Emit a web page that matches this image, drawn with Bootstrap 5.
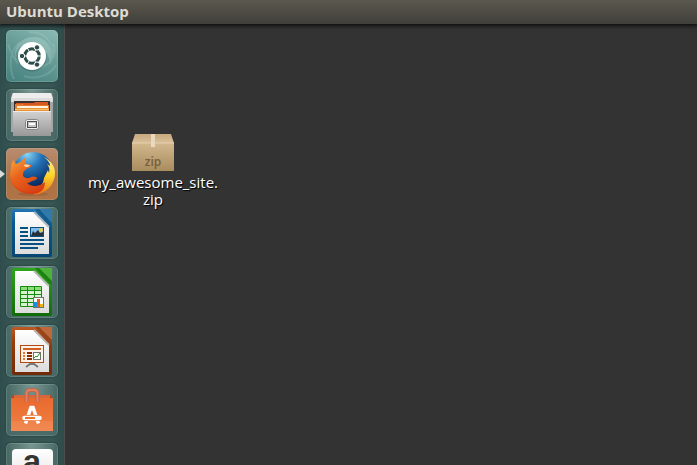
<!DOCTYPE html>
<html lang="en">
<head>
<meta charset="utf-8">
<meta name="viewport" content="width=device-width, initial-scale=1">
<title>Ubuntu Desktop</title>
<link href="https://cdn.jsdelivr.net/npm/bootstrap@5.3.0/dist/css/bootstrap.min.css" rel="stylesheet">
<style>
body { background: #333; font-family: "Open Sans", "Noto Sans", sans-serif; }
.top-panel { height: 24px; padding: 0 6px; background: linear-gradient(#5b584e, #403f3a); z-index: 2; box-shadow: 0 1px 4px 1px rgba(0,0,0,.75); }
.panel-title { font-size: 15px; line-height: 22px; font-weight: 700; color: #dfdbd2; }
.launcher { width: 65px; padding: 6px; gap: 7px; background: linear-gradient(90deg, #2f4d4c, #365553 12px, #365553 52px, #2f4b4a); border-right: 1px solid #4d4f4f; }
.tile { width: 52px; height: 52px; border-radius: 5px; background: radial-gradient(ellipse at 50% 0, rgba(215,240,232,.42), rgba(150,190,180,.22) 65%, rgba(150,190,180,.2)); box-shadow: inset 0 0 0 1px rgba(190,220,212,.2), 0 0 2px rgba(10,30,30,.6); }
.tile-dash { background: linear-gradient(25deg, #45817e, #659a95 55%, #8dbcb6); }
.tile-fox { background: linear-gradient(#b98d70, #ad7144 60%, #b07446); }
.tile svg { width: 52px; height: 52px; }
.running { left: -6px; top: 22px; width: 5px; height: 8px; background: #d8dcdb; clip-path: polygon(0 0, 100% 50%, 0 100%); }
.workspace { padding: 107px 20px; }
.file-item { width: 136px; gap: 1px; color: #fff; font-size: 15px; line-height: 17px; }
.file-item:hover { color: #fff; }
.file-item svg { width: 44px; height: 42px; }
.file-name { text-shadow: 1px 1px 1px #000; }
</style>
<script src="https://cdn.jsdelivr.net/npm/bootstrap@5.3.0/dist/js/bootstrap.bundle.min.js" defer></script>
</head>
<body class="d-flex flex-column vh-100 overflow-hidden">
<svg width="0" height="0" class="position-absolute" aria-hidden="true">
  <defs>
    <linearGradient id="paper" x2="0" y2="1"><stop stop-color="#fff"/><stop offset="1" stop-color="#dcdcdc"/></linearGradient>
    <linearGradient id="metal" x2="0" y2="1"><stop stop-color="#d2d2d2"/><stop offset="1" stop-color="#989898"/></linearGradient>
    <linearGradient id="blue" x2="0" y2="1"><stop stop-color="#2278b4"/><stop offset=".3" stop-color="#07588f"/><stop offset="1" stop-color="#064674"/></linearGradient>
    <linearGradient id="green" x2="0" y2="1"><stop stop-color="#2ea51c"/><stop offset="1" stop-color="#116b08"/></linearGradient>
    <linearGradient id="rust" x2="0" y2="1"><stop stop-color="#c05a24"/><stop offset=".3" stop-color="#9b3c0c"/><stop offset="1" stop-color="#702a08"/></linearGradient>
    <radialGradient id="globe" cx=".35" cy=".05" r=".8"><stop stop-color="#8bd5f4"/><stop offset=".45" stop-color="#2474b9"/><stop offset="1" stop-color="#0a2c61"/></radialGradient>
    <linearGradient id="fur" x1=".1" x2=".8" y2="1"><stop stop-color="#f9a33c"/><stop offset=".4" stop-color="#e9641d"/><stop offset="1" stop-color="#d63b12"/></linearGradient>
    <linearGradient id="tail" x2="0" y2="1"><stop stop-color="#fff3a0"/><stop offset=".5" stop-color="#fcd325"/><stop offset="1" stop-color="#ec731b"/></linearGradient>
    <linearGradient id="bag" x2="0" y2="1"><stop stop-color="#e96a2e"/><stop offset="1" stop-color="#f08045"/></linearGradient>
    <linearGradient id="box" x2="0" y2="1"><stop stop-color="#d3b88e"/><stop offset="1" stop-color="#a98c5e"/></linearGradient>
    <linearGradient id="boxtop" x2="0" y2="1"><stop stop-color="#c8a87e"/><stop offset="1" stop-color="#d9c09a"/></linearGradient>
  </defs>
</svg>

<header class="top-panel flex-shrink-0 position-relative">
  <h1 class="panel-title m-0">Ubuntu Desktop</h1>
</header>

<div class="d-flex flex-grow-1 overflow-hidden">
  <nav class="launcher d-flex flex-column flex-shrink-0 overflow-hidden" aria-label="Launcher">
    <button type="button" class="tile tile-dash border-0 p-0 d-flex flex-shrink-0" aria-label="Search your computer">
      <svg viewBox="0 0 52 52" fill="none">
        <path d="M12 37C3 20 14 6 29 7c13 1 20 13 15 25-3-14-14-23-27-17C8 20 8 29 12 37Z" fill="#c7e4dd" opacity=".3"/>
        <path d="M2 14C8 35 22 43 38 36c9-4 13-14 9-23M23 2c17 0 29 13 21 32M8 49C2 37 4 20 14 12M18 46c11 4 26 0 32-11" stroke="#c7e4dd" stroke-width="2" opacity=".18"/>
        <circle cx="26" cy="27" r="14.5" fill="#28504d" opacity=".35"/>
        <circle cx="26" cy="26" r="14" fill="#fff"/>
        <circle cx="26" cy="26" r="7.2" stroke="#2d4d4b" stroke-width="3.2"/>
        <path d="M26 26H17M26 26l4.7-8M26 26l4.7 8M26 26h9M26 26l-4.7 8M26 26l-4.7-8" stroke="#fff" stroke-width="1"/>
        <circle cx="26" cy="26" r="5.5" fill="#fff"/>
        <g fill="#2d4d4b" stroke="#fff"><circle cx="16" cy="26" r="2.7"/><circle cx="31" cy="17.4" r="2.7"/><circle cx="31" cy="34.6" r="2.7"/></g>
      </svg>
    </button>
    <button type="button" class="tile border-0 p-0 d-flex flex-shrink-0" aria-label="Files">
      <svg viewBox="0 0 52 52">
        <path d="M6 5q0-1 1-1h38q1 0 1 1l1 4v34H5V9Z" fill="#a5a5a5"/>
        <path d="M7 4h38l2 6H5Z" fill="#ededed"/><path d="M5 9h42v4H5Z" fill="#dcdcdc"/>
        <path d="M8 12h36v11H8Z" fill="#3a3030"/>
        <path d="M10 16v-2h18l1-1h13v10H10Z" fill="#d4581f"/><path d="M9 15h8l1 1h25v7H9Z" fill="#e5782a"/>
        <path d="M11 17h31v2H11Z" fill="#fff3e3"/><path d="M9 19h34v4H9Z" fill="#e99135"/><path d="M9 20h34v1H9Z" fill="#f7c070"/>
        <path d="M7 22h38v25H7Z" fill="url(#metal)"/><path d="M7 22h38v1H7Z" fill="#ececec"/>
        <rect x="19.5" y="30.5" width="13" height="10" rx="2" fill="#eee" stroke="#858585"/><rect x="21.5" y="32.5" width="9" height="6" fill="#c4c4c4" stroke="#4d4d4d"/><path d="M23 34h6v2h-6Z" fill="#fff"/>
      </svg>
    </button>
    <button type="button" class="tile tile-fox border-0 p-0 d-flex flex-shrink-0 position-relative" aria-label="Firefox">
      <span class="running position-absolute"></span>
      <svg viewBox="0 0 52 52">
        <ellipse cx="27" cy="46" rx="15" ry="2" fill="#5b361d" opacity=".2"/>
        <circle cx="27" cy="24" r="20" fill="url(#globe)"/>
        <path d="M38 9c7 4 11 9 11 16 0 11-8 20-20 22l-4-5c8-1 12-4 13-12l4-8 1 3c1-4 0-6-2-9l3 2c0-4-3-6-6-9Z" fill="url(#tail)"/>
        <path d="M5 19c0-3 1-4 2-7l3 4c2-1 3-2 5-2 1-2 3-4 5-5-1 3-1 5 0 7l5 1c1 1-1 3-3 3l-4 3c-2 4-1 6 2 7 4 1 6-3 10-1 2 1 1 3-4 4-2 1-3 2-5 2 4 4 12 4 18-1 0 6-3 11-12 12C14 47 4 38 4 28c0-4 1-6 1-9Z" fill="url(#fur)"/>
        <path d="M18 17c2-1 4 0 6 0-1 2-3 2-4 2s-2-1-2-2Z" fill="#fff0d5" opacity=".8"/>
        <path d="M4 25c1 13 11 20 24 19 7-1 10-4 11-7-2 7-6 9-12 9C14 47 4 38 4 25Z" fill="#c93412" opacity=".25"/>
      </svg>
    </button>
    <button type="button" class="tile border-0 p-0 d-flex flex-shrink-0" aria-label="LibreOffice Writer">
      <svg viewBox="0 0 52 52">
        <rect x="6" y="2" width="40" height="48" rx="2" fill="url(#blue)"/>
        <path d="M29 2h17v18Z" fill="#145b8b"/><path d="M33 2h13v14Z" fill="#2f79ab"/>
        <path d="M9 5h19l15 15v27H9Z" fill="url(#paper)"/><path d="m28 5 15 15" stroke="#b4b9bc" stroke-width="2"/>
        <path d="M14 21h8M14 25h8M14 29h8M14 33h24M14 37h24M14 41h18" stroke="#075082" stroke-width="2"/>
        <rect x="24.5" y="20.5" width="13" height="9" fill="#82bde7" stroke="#075082"/><circle cx="35" cy="23" r="2" fill="#e7c847"/><path d="m25 29 2-5 2 2 3-3 2 3 3-1v4Z" fill="#27313a"/>
      </svg>
    </button>
    <button type="button" class="tile border-0 p-0 d-flex flex-shrink-0" aria-label="LibreOffice Calc">
      <svg viewBox="0 0 52 52">
        <rect x="6" y="2" width="40" height="48" rx="2" fill="url(#green)"/>
        <path d="M29 2h17v18Z" fill="#1e8012"/><path d="M33 2h13v13Z" fill="#4db23a"/>
        <path d="M9 5h19l15 15v27H9Z" fill="url(#paper)"/><path d="m28 5 15 15" stroke="#b3bab2" stroke-width="2"/>
        <path d="M14.5 20.5h21v20h-21Z" fill="#d7f3cf"/><path d="M15 21h20v4H15Z" fill="#8dde78"/>
        <path d="M14.5 20.5h21v20h-21ZM14 24.5h22M14 28.5h22M14 32.5h22M14 36.5h22M21.5 20v21M28.5 20v21" fill="none" stroke="#188a0d"/>
        <rect x="27.5" y="31.5" width="10" height="10" fill="#fff" stroke="#6f746f"/><path d="M28 36h3v5h-3Z" fill="#1a8fe2"/><path d="M31 33h3v8h-3Z" fill="#e65e16"/><path d="M34 38h3v3h-3Z" fill="#e8b51a"/>
      </svg>
    </button>
    <button type="button" class="tile border-0 p-0 d-flex flex-shrink-0" aria-label="LibreOffice Impress">
      <svg viewBox="0 0 52 52">
        <rect x="6" y="2" width="40" height="48" rx="2" fill="url(#rust)"/>
        <path d="M29 2h17v18Z" fill="#95451d"/><path d="M33 2h13v13Z" fill="#c0683b"/>
        <path d="M9 5h19l15 15v27H9Z" fill="url(#paper)"/><path d="m28 5 15 15" stroke="#bdb5b1" stroke-width="2"/>
        <path d="m20 42 4-3h4l4 3" fill="none" stroke="#777" stroke-width="2"/><path d="M26 36v4" stroke="#777" stroke-width="2"/>
        <rect x="14.5" y="20.5" width="23" height="17" fill="#fff2e8" stroke="#b24a14"/><path d="M17 24h18" stroke="#d15f1f" stroke-width="2"/>
        <path d="M17 28h2M17 31h2M17 34h2" stroke="#e47531" stroke-width="2"/><path d="M21 28h5M21 31h5M21 34h5" stroke="#842d08" stroke-width="2"/>
        <rect x="27.5" y="27.5" width="7" height="7" fill="#fff" stroke="#6d726c"/><path d="m28 33 2-2 1 1 3-4" fill="none" stroke="#259b1b"/>
      </svg>
    </button>
    <button type="button" class="tile border-0 p-0 d-flex flex-shrink-0" aria-label="Ubuntu Software">
      <svg viewBox="0 0 52 52">
        <path d="M7 11h38l2 4v32H5V15Z" fill="#b94518"/><path d="M8 11h36v4H8Z" fill="#d8673c"/>
        <path d="M5 14h42v33H5Z" fill="url(#bag)"/><path d="M5 37h42v10H5Z" fill="#fff" opacity=".07"/>
        <path d="M20.5 18v-8q0-4 4-4h3q4 0 4 4v8" fill="none" stroke="#c2644a" stroke-width="4"/><path d="M20.5 18v-8q0-4 4-4h3q4 0 4 4v8" fill="none" stroke="#e0805f" stroke-width="2"/>
        <path d="m19.5 39.5 5.500-16h2l5.500 16" fill="none" stroke="#fff" stroke-width="3.5"/>
        <path d="M18 34h16" stroke="#ed722f" stroke-width="6"/>
        <path d="M18.500 34h15" stroke="#fff" stroke-width="4.500" stroke-linecap="round"/><path d="M19 34h10" stroke="#ed722f" stroke-width="2"/>
      </svg>
    </button>
    <button type="button" class="tile border-0 p-0 d-flex flex-shrink-0" aria-label="Amazon">
      <svg viewBox="0 0 52 52">
        <rect x="6" y="6" width="41" height="42" rx="4" fill="url(#paper)"/>
        <text x="26" y="30" text-anchor="middle" font-family="Liberation Sans, sans-serif" font-size="33" font-weight="700" fill="#333">a</text>
        <path d="M13 37q14 8 26 0" fill="none" stroke="#f39a20" stroke-width="3"/>
      </svg>
    </button>
  </nav>

  <main class="workspace flex-grow-1">
    <button type="button" class="file-item btn border-0 p-0 d-flex flex-column align-items-center">
      <svg viewBox="0 0 44 42" aria-hidden="true">
        <path d="M1 11 4 3h36l3 8v28H1Z" fill="#1f1f1f" opacity=".4"/>
        <path d="M4 3h36l3 9H1Z" fill="url(#boxtop)"/>
        <path d="M1 12h42v28H1Z" fill="url(#box)"/><path d="M1 12h42" stroke="#e5d0ae"/>
        <path d="M20 3h4v13h-4Z" fill="#ead9bf"/>
        <text x="22" y="35" text-anchor="middle" font-family="Open Sans, sans-serif" font-size="12" font-weight="600" fill="#75603e">zip</text>
      </svg>
      <span class="file-name">my_awesome_site.<br>zip</span>
    </button>
  </main>
</div>
</body>
</html>
